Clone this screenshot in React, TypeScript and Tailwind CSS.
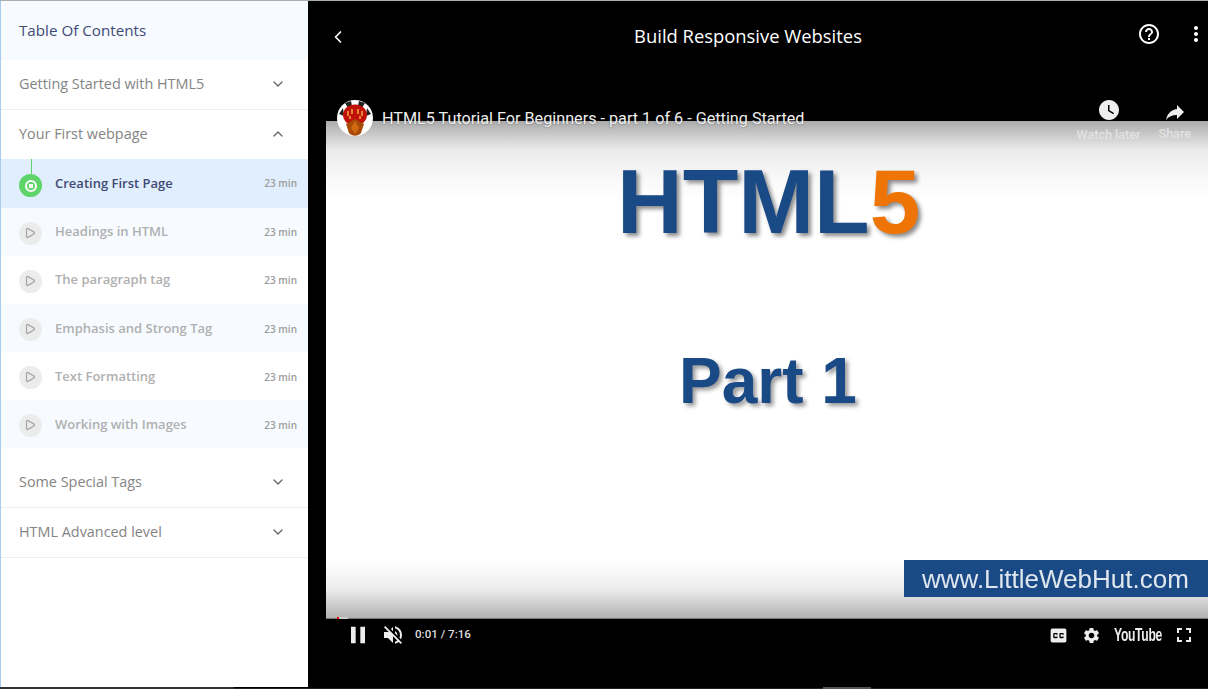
import React from "react";
import { ChevronDown, ChevronUp, ChevronLeft, Play } from "lucide-react";
import {
  MdClosedCaption,
  MdHelpOutline,
  MdMoreVert,
  MdPause,
  MdSettings,
  MdVolumeOff,
  MdWatchLater,
} from "react-icons/md";

const LESSONS = [
  "Headings in HTML",
  "The paragraph tag",
  "Emphasis and Strong Tag",
  "Text Formatting",
  "Working with Images",
];

const Section: React.FC<{ title: string; open?: boolean }> = ({ title, open }) => (
  <div
    className={`flex items-center justify-between pl-[18px] pr-[22px] pb-[2px] text-[14.4px] text-[#848484] ${
      open ? "h-[49px]" : "h-[50px] border-b border-[#eceef0]"
    }`}
  >
    <span>{title}</span>
    {open ? <ChevronUp className="w-4 h-4 text-[#666]" /> : <ChevronDown className="w-4 h-4 text-[#666]" />}
  </div>
);

const Sidebar: React.FC = () => (
  <aside className="w-[308px] shrink-0 h-full bg-white border-l border-[#a9cbf0] font-['Open_Sans',sans-serif] overflow-hidden">
    <div className="h-[59px] bg-[#f7fbff] flex items-center pl-[18px] text-[15.2px] text-[#3f4a75]">Table Of Contents</div>
    <Section title="Getting Started with HTML5" />
    <Section title="Your First webpage" open />

    {/* Active lesson */}
    <div className="relative h-[49px] bg-[#e1eefd] flex items-center pl-[18px] pr-[11px]">
      <span className="absolute left-[30px] top-0 h-[15px] w-px bg-[#5ed46a]" />
      <span className="w-[23px] h-[23px] mt-[4px] rounded-full bg-[#5ed46a] flex items-center justify-center">
        <span className="w-[12px] h-[12px] rounded-full border-2 border-white flex items-center justify-center">
          <span className="w-[4px] h-[4px] bg-white" />
        </span>
      </span>
      <span className="ml-[13px] flex-1 text-[13px] font-semibold text-[#3f4a75]">Creating First Page</span>
      <span className="text-[10px] font-semibold text-[#9b9b9b]">23 min</span>
    </div>

    {LESSONS.map((name, i) => (
      <div
        key={name}
        className={`h-[48px] flex items-center pl-[18px] pr-[11px] ${i % 2 === 0 ? "bg-[#f7fbff]" : "bg-white"} ${i >= 2 ? "pt-[2px]" : ""}`}
      >
        <span className={`w-[23px] h-[23px] rounded-full bg-[#ececec] flex items-center justify-center ${i >= 2 ? "mt-0" : "mt-[2px]"}`}>
          <Play className="w-[12px] h-[12px] -ml-[1px] text-[#a9a9a9]" strokeWidth={2.6} />
        </span>
        <span className="ml-[13px] flex-1 text-[13px] font-semibold text-[#b0b0b0]">{name}</span>
        <span className="text-[10px] font-semibold text-[#9b9b9b]">23 min</span>
      </div>
    ))}

    <div className="h-[10px]" />
    <Section title="Some Special Tags" />
    <Section title="HTML Advanced level" />
  </aside>
);

const ChannelLogo: React.FC = () => (
  <svg viewBox="0 0 36 36" className="w-9 h-9 shrink-0">
    <circle cx="18" cy="18" r="18" fill="#fff" />
    <path d="M8 3l6-2 1 5-4 2zM28 3l-6-2-1 5 4 2zM2 14l4-6 1 8zM34 14l-4-6-1 8z" fill="#222" />
    <ellipse cx="18" cy="15" rx="12" ry="10.5" fill="#c01208" />
    <path d="M9 24l9-5 9 5-3 9c-3 3.500-9 3.500-12 0z" fill="#a84a08" />
    <path d="M18 21l4 7-4 6-4-6z" fill="#d06a10" />
    <path d="M11 11v5M15 9v5M21 9v5M25 11v5M13 16v3M23 16v3" stroke="#f0a040" strokeWidth="1.6" />
  </svg>
);

const ShareIcon: React.FC = () => (
  <svg viewBox="0 0 24 24" className="w-[24px] h-[24px]" fill="#eeeeee">
    <path d="M14 9V5l7 7-7 7v-4.100c-5 0-8.500 1.600-11 5.100 1-5 4-10 11-11z" />
  </svg>
);

const FullscreenIcon: React.FC = () => (
  <svg viewBox="0 0 16 16" className="w-4 h-4" fill="none" stroke="#eee" strokeWidth="2">
    <path d="M2 6V2h4M10 2h4v4M14 10v4h-4M6 14H2v-4" />
  </svg>
);

const Video: React.FC = () => (
  <div className="relative ml-[18px] h-[498px]">
    {/* frame of the video */}
    <div className="h-full flex flex-col bg-[linear-gradient(to_bottom,#ababab_0px,#ebebeb_29px,#fafafa_60px,#ffffff_80px,#ffffff_440px,#ebebeb_469px,#b0b0b0_498px)] font-['Liberation_Sans',sans-serif] font-bold overflow-hidden">
      <div className="pt-[27px] pl-[291px] text-[91px] leading-[108px] text-[#1a4a86] [text-shadow:3px_3px_4px_#8a8a8a] blur-[0.5px] whitespace-nowrap">
        HTML<span className="text-[#ee7406]">5</span>
      </div>
      <div className="mt-[86px] pl-[353px] text-[64px] leading-[78px] text-[#1a4a86] [text-shadow:3px_3px_4px_#9a9a9a] blur-[0.7px] whitespace-nowrap">
        Part 1
      </div>
      <div className="mt-auto mb-[22px] self-end w-[304px] h-[37px] bg-[#1a4a86] flex items-center pl-[18px] text-[26px] leading-none font-normal text-[#dfe6ee] blur-[0.3px] whitespace-nowrap">
        www.LittleWebHut.com
      </div>
    </div>

    {/* player chrome sitting over the frame */}
    <div className="absolute left-[11px] right-[17px] top-[-21px] flex items-start font-['Roboto',sans-serif] text-[#eeeeee]">
      <ChannelLogo />
      <span className="ml-[9px] mt-[8px] text-[16.2px] leading-[21px] whitespace-nowrap flex-1 [text-shadow:0_0_2px_rgba(0,0,0,0.5)]">
        HTML5 Tutorial For Beginners - part 1 of 6 - Getting Started
      </span>
      <div className="flex flex-col items-center w-[64px]">
        <MdWatchLater className="w-[24px] h-[24px] -mt-[2px]" />
        <span className="text-[12.6px] leading-[14px] font-medium mt-[6px] text-[#e2e2e2] whitespace-nowrap">Watch later</span>
      </div>
      <div className="flex flex-col items-center ml-[18px]">
        <ShareIcon />
        <span className="text-[12.6px] leading-[14px] font-medium mt-[3px] text-[#e2e2e2]">Share</span>
      </div>
    </div>

    {/* progress bar */}
    <div className="absolute left-0 right-0 bottom-0 h-[1px] bg-[#777]" />
    <div className="absolute left-[11px] bottom-0 w-[11px] h-[2px] bg-[#ccc]">
      <div className="w-[2px] h-[2px] bg-[#f00]" />
    </div>
  </div>
);

const Controls: React.FC = () => (
  <div className="h-[32px] ml-[18px] flex items-center pl-[18px] pr-[16px] text-[#eeeeee] font-['Roboto',sans-serif]">
    <MdPause className="w-[28px] h-[28px]" />
    <MdVolumeOff className="w-[24px] h-[24px] ml-[9px]" />
    <span className="ml-[10px] text-[11.6px] font-medium text-[#dddddd]">0:01 / 7:16</span>
    <MdClosedCaption className="ml-auto w-[21px] h-[21px]" />
    <MdSettings className="ml-[13px] w-[19px] h-[19px]" />
    <span className="ml-[13px] w-[48px] text-[19px] font-['Liberation_Sans',sans-serif] font-bold tracking-[-0.5px] scale-x-[0.64] origin-left whitespace-nowrap">YouTube</span>
    <span className="ml-[14px]"><FullscreenIcon /></span>
  </div>
);

export default function App() {
  return (
    <div className="w-[1208px] h-[689px] bg-black overflow-hidden flex flex-col">
      <div className="h-px bg-[#adadad] shrink-0" />
      <div className="flex-1 min-h-0 flex">
        <Sidebar />
        <main className="flex-1 flex flex-col bg-black">
          <header className="h-[71px] flex items-center text-white">
            <div className="w-[60px] pl-[20px]"><ChevronLeft className="w-5 h-5" /></div>
            <h1 className="flex-1 text-center text-[18.4px] pb-[2px] font-['Open_Sans',sans-serif] font-normal">Build Responsive Websites</h1>
            <div className="w-[80px] flex items-center justify-end -mt-[6px]">
              <MdHelpOutline className="w-[24px] h-[24px]" />
              <MdMoreVert className="w-[24px] h-[24px] ml-[23px]" />
            </div>
          </header>
          <div className="h-[49px]" />
          <Video />
          <Controls />
        </main>
      </div>

      {/* window scroll strip along the bottom edge */}
      <div className="h-[2px] shrink-0 flex">
        <div className="w-[234px] bg-[#333]" />
        <div className="flex-1 flex items-end relative">
          <div className="w-full h-px bg-[#222]" />
          <div className="absolute left-[589px] top-0 w-[48px] h-[2px] bg-[#555]" />
        </div>
      </div>
    </div>
  );
}
